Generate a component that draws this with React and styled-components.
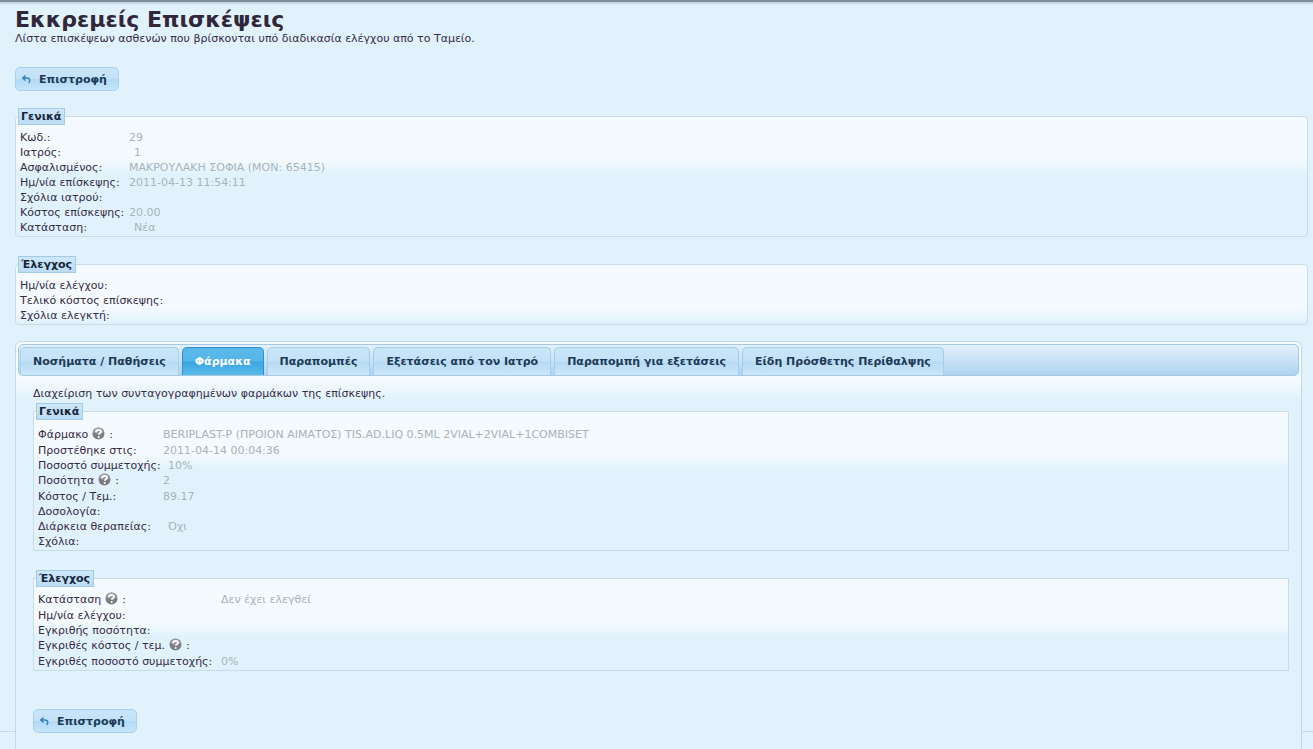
import React, { useState } from "react";
import styled, { createGlobalStyle } from "styled-components";

const GlobalStyle = createGlobalStyle`
  html {
    scrollbar-width: none;
    background: #e1f2fd;
  }

  body {
    min-height: 100vh;
    margin: 0;
    color: #362b46;
    font-family: Verdana, "DejaVu Sans", sans-serif;
    font-size: 11px;
    line-height: 15px;
  }
`;

const Page = styled.main`
  padding: 7px 5px 0 15px;
  border-top: 2px solid #7f8f9c;
  border-bottom: 1px solid #c6dae8;
  background: linear-gradient(#bccdd9, #e1f2fd 3px);
`;

const Title = styled.h1`
  margin: 0 0 1px;
  color: #30283a;
  font-size: 22px;
  line-height: 21px;
`;

const Intro = styled.p`
  margin: 0;
`;

const BackButton = styled.button`
  display: flex;
  align-items: center;
  gap: 8px;
  height: 24px;
  margin: ${({ $nested }) => ($nested ? "38px 0 0" : "21px 0 17px")};
  padding: 0 11px 0 5px;
  border: 1px solid #a9d0ec;
  border-radius: 5px;
  background: linear-gradient(#c9e5f9 0, #c3e2f8 48%, #b2daf6 52%, #c6e5fa 100%);
  color: #1d3a55;
  font: bold 11px/15px Verdana, "DejaVu Sans", sans-serif;
  cursor: pointer;
`;

const Group = styled.fieldset`
  min-width: 0;
  margin: 0;
  padding: ${({ $loose }) => ($loose ? 7 : 5)}px 4px 1px;
  border: 1px solid #c8dde9;
  border-radius: ${({ $nested }) => ($nested ? "0" : "4px")};
  background: linear-gradient(#f4fafd 0, #f4fafd 42px, #e1f2fd 58px);

  & + & {
    margin-top: 19px;
  }
`;

const GroupTitle = styled.legend`
  margin-left: -2px;
  padding: 0 3px 0 2px;
  border: 1px solid #a3cbe8;
  background: linear-gradient(#cfe7f9, #bbdcf4);
  color: #17263a;
  font-weight: bold;
  line-height: 15px;
`;

const Fields = styled.dl`
  display: grid;
  grid-template-columns: ${({ $label }) => $label}px 1fr;
  margin: 0;
`;

const Label = styled.dt`
  display: flex;
  align-items: flex-start;
  gap: 4px;
  min-height: ${({ $tall }) => ($tall ? 16 : 15)}px;
  white-space: nowrap;
`;

const Value = styled.dd`
  margin: 0;
  padding-left: ${({ $inset }) => ($inset ? 5 : 0)}px;
  color: #a9b3ba;
`;

const Tabs = styled.section`
  margin: 16px 6px -31px 0;
  padding: 2px;
  border: 1px solid #c3d9e8;
  border-radius: 6px;
  background: linear-gradient(#f4fafe 0, #f4fafe 38px, #e1f2fd 58px);
`;

const TabList = styled.div`
  display: flex;
  align-items: flex-end;
  gap: 3px;
  height: 30px;
  padding: 0 1px;
  border: 1px solid #a6c9e2;
  border-radius: 5px;
  background: linear-gradient(#e3f1fb, #add3f0);
`;

const Tab = styled.button`
  height: 28px;
  padding: 0 12px;
  border: 1px solid ${({ $active }) => ($active ? "#2f8fce" : "#a6cdea")};
  border-bottom: 0;
  border-radius: 5px 5px 0 0;
  background: ${({ $active }) =>
    $active
      ? "linear-gradient(#5cb8ea 0, #55b5e9 48%, #3aa5e1 52%, #5dbbec 100%)"
      : "linear-gradient(#c9e5f8 0, #c4e2f7 48%, #b7daf3 52%, #cbe7f9 100%)"};
  color: ${({ $active }) => ($active ? "#fff" : "#1d3a55")};
  font: bold 11px/15px Verdana, "DejaVu Sans", sans-serif;
  white-space: nowrap;
  cursor: pointer;
`;

const Panel = styled.div`
  padding: 10px 10px 26px 15px;
`;

const PanelIntro = styled.p`
  margin: 0 0 2px;
`;

const HelpIcon = () => (
  <svg width="13" height="13" viewBox="0 0 13 13" aria-hidden="true">
    <circle cx="6.5" cy="6.5" r="6" fill="#7b7d80" />
    <path d="M1 5.2a5.6 5.6 0 0 1 11 0C9 7 4 7 1 5.2z" fill="#9a9c9f" />
    <path
      d="M4 5.200c0-1.700 1.100-2.400 2.500-2.400s2.500.8 2.500 2c0 1.500-2.200 1.400-2.200 3"
      fill="none"
      stroke="#fff"
      strokeWidth="1.8"
    />
    <circle cx="6.7" cy="10" r="1" fill="#fff" />
  </svg>
);

const ReturnIcon = () => (
  <svg width="10" height="10" viewBox="0 0 10 10" aria-hidden="true">
    <path d="M0.500 4L4.500 0.500v7z" fill="#3d86b8" />
    <path
      d="M3.500 4h2.500c1.800 0 2.700 1 2.700 2.500 0 1-.4 1.800-1 2.500"
      fill="none"
      stroke="#3d86b8"
      strokeWidth="1.5"
    />
  </svg>
);

const generalFields = [
  { label: "Κωδ.", value: "29" },
  { label: "Ιατρός", value: "1", inset: true },
  { label: "Ασφαλισμένος", value: "ΜΑΚΡΟΥΛΑΚΗ ΣΟΦΙΑ (ΜΟΝ: 65415)" },
  { label: "Ημ/νία επίσκεψης", value: "2011-04-13 11:54:11" },
  { label: "Σχόλια ιατρού" },
  { label: "Κόστος επίσκεψης", value: "20.00" },
  { label: "Κατάσταση", value: "Νέα", inset: true },
];

const checkFields = [
  { label: "Ημ/νία ελέγχου" },
  { label: "Τελικό κόστος επίσκεψης" },
  { label: "Σχόλια ελεγκτή" },
];

const drugFields = [
  {
    label: "Φάρμακο",
    help: true,
    value: "BERIPLAST-P (ΠΡΟΙΟΝ ΑΙΜΑΤΟΣ) TIS.AD.LIQ 0.5ML 2VIAL+2VIAL+1COMBISET",
  },
  { label: "Προστέθηκε στις", value: "2011-04-14 00:04:36" },
  { label: "Ποσοστό συμμετοχής", value: "10%", inset: true },
  { label: "Ποσότητα", help: true, value: "2" },
  { label: "Κόστος / Τεμ.", value: "89.17" },
  { label: "Δοσολογία" },
  { label: "Διάρκεια θεραπείας", value: "Όχι", inset: true },
  { label: "Σχόλια" },
];

const drugCheckFields = [
  { label: "Κατάσταση", help: true, value: "Δεν έχει ελεγθεί" },
  { label: "Ημ/νία ελέγχου" },
  { label: "Εγκριθής ποσότητα" },
  { label: "Εγκριθές κόστος / τεμ.", help: true },
  { label: "Εγκριθές ποσοστό συμμετοχής", value: "0%" },
];

const tabs = [
  "Νοσήματα / Παθήσεις",
  "Φάρμακα",
  "Παραπομπές",
  "Εξετάσεις από τον Ιατρό",
  "Παραπομπή για εξετάσεις",
  "Είδη Πρόσθετης Περίθαλψης",
];

const FieldGroup = ({ title, fields, label, nested, loose }) => (
  <Group $nested={nested} $loose={loose}>
    <GroupTitle>{title}</GroupTitle>
    <Fields $label={label}>
      {fields.map((field) => (
        <React.Fragment key={field.label}>
          <Label $tall={field.help}>
            {field.help ? (
              <>
                {field.label}
                <HelpIcon />:
              </>
            ) : (
              `${field.label}:`
            )}
          </Label>
          <Value $inset={field.inset}>{field.value}</Value>
        </React.Fragment>
      ))}
    </Fields>
  </Group>
);

const Back = ({ nested }) => (
  <BackButton type="button" $nested={nested}>
    <ReturnIcon />
    Επιστροφή
  </BackButton>
);

const App = () => {
  const [active, setActive] = useState(1);

  return (
    <>
      <GlobalStyle />
      <Page>
        <Title>Εκκρεμείς Επισκέψεις</Title>
        <Intro>
          Λίστα επισκέψεων ασθενών που βρίσκονται υπό διαδικασία ελέγχου από το
          Ταμείο.
        </Intro>
        <Back />
        <FieldGroup title="Γενικά" fields={generalFields} label={109} />
        <FieldGroup title="Έλεγχος" fields={checkFields} label={150} />
        <Tabs>
          <TabList role="tablist">
            {tabs.map((name, index) => (
              <Tab
                key={name}
                type="button"
                role="tab"
                aria-selected={index === active}
                $active={index === active}
                onClick={() => setActive(index)}
              >
                {name}
              </Tab>
            ))}
          </TabList>
          <Panel role="tabpanel">
            <PanelIntro>
              Διαχείριση των συνταγογραφημένων φαρμάκων της επίσκεψης.
            </PanelIntro>
            <FieldGroup title="Γενικά" fields={drugFields} label={125} nested loose />
            <FieldGroup title="Έλεγχος" fields={drugCheckFields} label={183} nested />
            <Back nested />
          </Panel>
        </Tabs>
      </Page>
    </>
  );
};

export default App;
